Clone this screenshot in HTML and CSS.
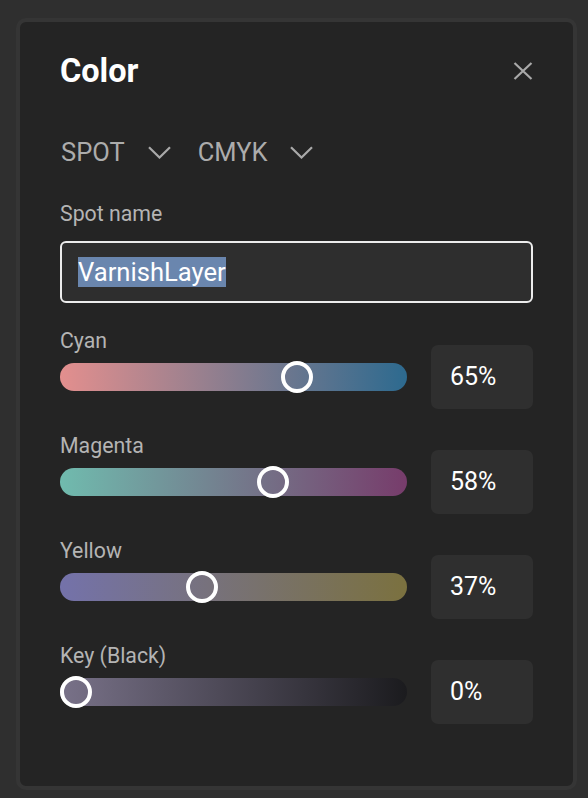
FILE: index.html
```html
<!DOCTYPE html>
<html lang="en">
<head>
<meta charset="utf-8">
<title>Color</title>
<link rel="stylesheet" href="styles.css">
</head>
<body>
<div class="panel">
  <div class="header">
    <h1 class="title">Color</h1>
    <button class="close" aria-label="Close">
      <svg width="24" height="24" viewBox="0 0 24 24"><path d="M3.5 4 L20.5 20 M20.5 4 L3.5 20" stroke="currentColor" stroke-width="2.2" fill="none" stroke-linecap="butt"/></svg>
    </button>
  </div>

  <div class="modes">
    <div class="dropdown">
      <span>SPOT</span>
      <svg class="chev" width="23" height="13" viewBox="0 0 23 13"><path d="M1 1.2 L11.5 11.5 L22 1.2" stroke="currentColor" stroke-width="2.2" fill="none"/></svg>
    </div>
    <div class="dropdown">
      <span>CMYK</span>
      <svg class="chev" width="23" height="13" viewBox="0 0 23 13"><path d="M1 1.2 L11.5 11.5 L22 1.2" stroke="currentColor" stroke-width="2.2" fill="none"/></svg>
    </div>
  </div>

  <div class="field-label">Spot name</div>
  <div class="text-input"><span class="selected">VarnishLayer</span></div>

  <div class="sliders">
    <div class="slider">
      <div class="slider-label">Cyan</div>
      <div class="slider-row">
        <div class="track track-cyan"><span class="thumb" style="left:221px"></span></div>
        <div class="value">65%</div>
      </div>
    </div>
    <div class="slider">
      <div class="slider-label">Magenta</div>
      <div class="slider-row">
        <div class="track track-magenta"><span class="thumb" style="left:197px"></span></div>
        <div class="value">58%</div>
      </div>
    </div>
    <div class="slider">
      <div class="slider-label">Yellow</div>
      <div class="slider-row">
        <div class="track track-yellow"><span class="thumb" style="left:126px"></span></div>
        <div class="value">37%</div>
      </div>
    </div>
    <div class="slider">
      <div class="slider-label">Key (Black)</div>
      <div class="slider-row">
        <div class="track track-key"><span class="thumb" style="left:0px"></span></div>
        <div class="value">0%</div>
      </div>
    </div>
  </div>
</div>
</body>
</html>
```

FILE: styles.css
```css
* { box-sizing: border-box; }

html, body {
  margin: 0;
  padding: 0;
  background: #2f2f2f;
}

body {
  font-family: Roboto, "Noto Sans", "Liberation Sans", sans-serif;
  color: #ffffff;
}

.panel {
  margin: 18px 0 0 16px;
  width: 561px;
  height: 772px;
  border: 4px solid #353535;
  border-radius: 10px;
  background: #242424;
  padding: 29px 40px 0 40px;
}

.header {
  display: flex;
  justify-content: space-between;
  align-items: center;
  height: 40px;
}

.title {
  margin: 0;
  font-size: 32.5px;
  line-height: 40px;
  font-weight: 700;
  color: #ffffff;
}

.close {
  width: 24px;
  height: 24px;
  padding: 0;
  margin: 0 -2px 0 0;
  border: 0;
  background: none;
  color: #a9a9a9;
  display: flex;
}

.modes {
  margin-top: 46px;
  margin-left: 1px;
  display: flex;
  gap: 27px;
  font-size: 25.5px;
  line-height: 30px;
  color: #acacac;
}

.dropdown {
  display: flex;
  align-items: center;
  gap: 23px;
}

.chev {
  color: #a9a9a9;
  display: block;
}

.field-label {
  margin-top: 34px;
  font-size: 21.3px;
  line-height: 26px;
  color: #b4b4b4;
}

.text-input {
  margin-top: 14px;
  height: 62px;
  border: 2px solid #ececec;
  border-radius: 6px;
  background: #2e2e2e;
  padding: 0 16px;
  display: flex;
  align-items: center;
  font-size: 25.6px;
  line-height: 30px;
  color: #ffffff;
}

.selected {
  background: #6a86ae;
}

.sliders {
  margin-top: 25px;
  display: flex;
  flex-direction: column;
  gap: 42px;
}

.slider-label {
  font-size: 21.3px;
  line-height: 26px;
  color: #b4b4b4;
}

.slider-row {
  margin-top: 9px;
  height: 28px;
  display: flex;
  align-items: center;
  gap: 24px;
}

.track {
  position: relative;
  flex: 1;
  height: 28px;
  border-radius: 14px;
}

.track-cyan { background: linear-gradient(90deg, #e38f8e, #2d6a8f); }
.track-magenta { background: linear-gradient(90deg, #70bbae, #773c6b); }
.track-yellow { background: linear-gradient(90deg, #7472aa, #7b713f); }
.track-key { background: linear-gradient(90deg, #797289, #1b1b1e); }

.thumb {
  position: absolute;
  top: -2px;
  width: 32px;
  height: 32px;
  border: 4px solid #ffffff;
  border-radius: 50%;
}

.value {
  flex-shrink: 0;
  width: 102px;
  height: 64px;
  border-radius: 7px;
  background: #2f2f2f;
  padding-left: 19px;
  display: flex;
  align-items: center;
  font-size: 25px;
  line-height: 30px;
  color: #ffffff;
}
```
